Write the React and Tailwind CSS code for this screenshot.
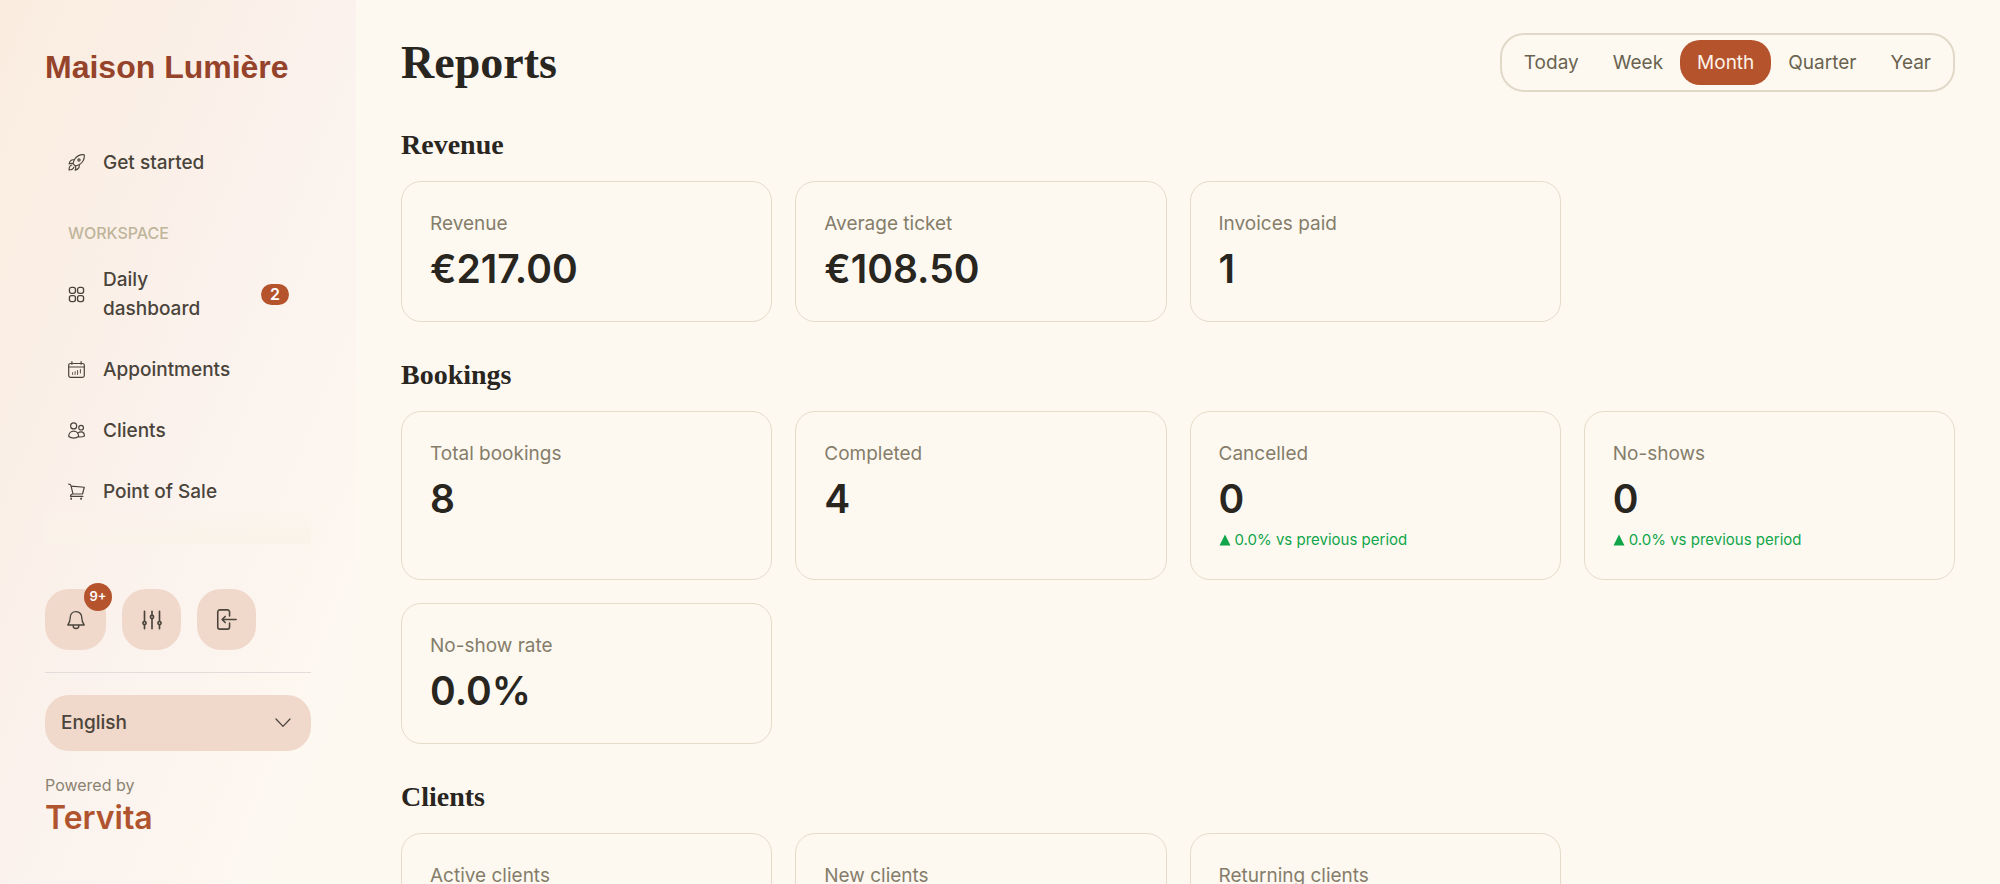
import React, { useState } from "react";

const iconProps = {
  viewBox: "0 0 24 24",
  fill: "none",
  stroke: "currentColor",
  strokeLinecap: "round",
  strokeLinejoin: "round",
  "aria-hidden": true,
};

const RocketIcon = ({ className }) => (
  <svg {...iconProps} strokeWidth="1.6" className={className}>
    <path d="M23 1c-6-.6-10.500 1.500-14.200 7.200L7 13.500 10.500 17l5.300-1.800C21.500 11.500 23.600 7 23 1z" />
    <circle cx="15.500" cy="8.500" r="1.600" />
    <path d="M9 8.200C5 7.500 2.500 9.500 1.500 14l3-1 2.500.5M15.800 15.200c.7 4-1.300 6.500-5.800 7.500l1-3-.5-2.700" />
    <path d="M5.500 15.500C3 16 1.500 18.500 1.500 22.500c4 0 6-1.500 6.800-4" />
  </svg>
);

const GridIcon = ({ className }) => (
  <svg {...iconProps} strokeWidth="1.9" className={className}>
    <rect x="2" y="2" width="8.500" height="8.500" rx="3" />
    <rect x="13.500" y="2" width="8.500" height="8.500" rx="3" />
    <rect x="2" y="13.500" width="8.500" height="8.500" rx="3" />
    <rect x="13.500" y="13.500" width="8.500" height="8.500" rx="3" />
  </svg>
);

const CalendarIcon = ({ className }) => (
  <svg {...iconProps} strokeWidth="1.7" className={className}>
    <rect x="1" y="3.500" width="22" height="19.500" rx="2.500" />
    <path d="M1 8.500h22M5.500 1v3.500M18.500 1v3.500" />
    <path d="M6.500 16.500v2.500M10 15v4M13.500 13.500V19M17.500 12v5" strokeWidth="1.3" />
  </svg>
);

const UsersIcon = ({ className }) => (
  <svg {...iconProps} strokeWidth="1.7" className={className}>
    <circle cx="8" cy="5.500" r="4.300" />
    <circle cx="18.500" cy="8" r="3.300" />
    <path d="M1 20.500c0-4.500 3-7.500 7-7.500s7 3 7 7.500C11 23.500 5 23.500 1 20.500z" />
    <path d="M14 15.500c1.200-1 2.800-1.500 4.500-1.500 2.800 0 4.700 2 4.700 5.800-2.200 1.200-5 1.600-8 1.200" />
  </svg>
);

const CartIcon = ({ className }) => (
  <svg {...iconProps} strokeWidth="1.7" className={className}>
    <path d="M1 1.500c2 0 2.800.5 3.300 2.500L7 15.500M4.500 4.500L23 6l-2.500 9.500H7c-2.500 0-3.500 1-3.500 3.500H21" />
    <path d="M4.500 21.500v1M18.500 21.500v1" strokeWidth="2.400" />
  </svg>
);

const BellIcon = ({ className }) => (
  <svg {...iconProps} strokeWidth="1.600" className={className}>
    <path d="M12 2c-4.500 0-7 3.300-7 7.500 0 4.500-1 6-2.800 8.500h19.600C20 15.500 19 14 19 9.500 19 5.300 16.500 2 12 2z" />
    <path d="M8.500 18.500c0 2.300 1.500 3.700 3.500 3.700s3.500-1.400 3.500-3.700" />
  </svg>
);

const SlidersIcon = ({ className }) => (
  <svg {...iconProps} strokeWidth="2" className={className}>
    <path d="M3 1.500v12M3 18v4.500M12 1.500v4.500M12 10.500v12M21 1.500v12M21 18v4.500" />
    <circle cx="3" cy="15.700" r="1.900" />
    <circle cx="12" cy="8.300" r="1.900" />
    <circle cx="21" cy="15.700" r="1.900" />
  </svg>
);

const LogoutIcon = ({ className }) => (
  <svg {...iconProps} strokeWidth="1.800" className={className}>
    <path d="M15.500 8V3.500c0-1.500-1-2.500-2.500-2.500H4.500C3 1 2 2 2 3.500v17C2 22 3 23 4.500 23H13c1.500 0 2.500-1 2.500-2.500V16" />
    <path d="M23 12H7.500M10.500 8.500L7 12l3.500 3.500" />
  </svg>
);

const ChevronIcon = ({ className }) => (
  <svg {...iconProps} strokeWidth="1.900" className={className}>
    <path d="M1.500 6L12 17 22.500 6" />
  </svg>
);

const workspaceLinks = [
  { label: "Daily dashboard", icon: GridIcon, count: 2 },
  { label: "Appointments", icon: CalendarIcon },
  { label: "Clients", icon: UsersIcon },
  { label: "Point of Sale", icon: CartIcon },
];

const periods = ["Today", "Week", "Month", "Quarter", "Year"];

const sections = [
  {
    title: "Revenue",
    stats: [
      { label: "Revenue", value: "€217.00" },
      { label: "Average ticket", value: "€108.50" },
      { label: "Invoices paid", value: "1" },
    ],
  },
  {
    title: "Bookings",
    stats: [
      { label: "Total bookings", value: "8" },
      { label: "Completed", value: "4" },
      { label: "Cancelled", value: "0", change: "0.0% vs previous period" },
      { label: "No-shows", value: "0", change: "0.0% vs previous period" },
      { label: "No-show rate", value: "0.0%" },
    ],
  },
  {
    title: "Clients",
    stats: [
      { label: "Active clients", value: "2" },
      { label: "New clients", value: "2" },
      { label: "Returning clients", value: "0" },
    ],
  },
];

const NavLink = ({ label, icon: Icon, count }) => (
  <a
    href="#"
    className="flex items-center gap-[18px] py-4 pl-[23px] pr-[22px] text-[19px] font-medium leading-[29px] text-[#4a443b]"
  >
    <Icon className="size-[17px] shrink-0" />
    <span className="flex-1">{label}</span>
    {count && (
      <span className="ml-8 rounded-full bg-[#b5532c] px-[9px] text-base font-semibold leading-[21px] text-white">
        {count}
      </span>
    )}
  </a>
);

const Sidebar = () => {
  const [language, setLanguage] = useState("en");

  return (
    <aside className="flex h-full w-[356px] shrink-0 flex-col bg-linear-to-br from-[#faecdf] via-[#fbf2ed] via-50% to-[#fdf9f1] to-90% p-[45px]">
      <div className="font-['Liberation_Sans',sans-serif] text-[32px] font-bold leading-[44px] text-[#95432a]">
        Maison Lumière
      </div>

      <div className="relative mt-[43px] min-h-0 flex-1 overflow-hidden">
        <nav className="flex flex-col">
          <NavLink label="Get started" icon={RocketIcon} />
          <h2 className="pb-1 pl-[23px] pt-7 text-base font-medium uppercase leading-6 text-[#bfb59b]">
            Workspace
          </h2>
          {workspaceLinks.map((link) => (
            <NavLink key={link.label} {...link} />
          ))}
        </nav>
        <div className="pointer-events-none absolute inset-x-0 bottom-0 h-9 bg-linear-to-b from-transparent to-[#faf3e9]" />
      </div>

      <div className="mt-[45px] flex gap-4 text-[#4a443b]">
        <button
          type="button"
          aria-label="Notifications"
          className="relative flex size-[61px] items-center justify-center rounded-3xl bg-[#f0d8cb]"
        >
          <BellIcon className="size-5" />
          <span className="absolute -right-[6px] -top-[6px] flex size-7 items-center justify-center rounded-full bg-[#b5532c] text-[13px] font-semibold text-white">
            9+
          </span>
        </button>
        <button
          type="button"
          aria-label="Settings"
          className="flex h-[61px] w-[59px] items-center justify-center rounded-3xl bg-[#f0d8cb]"
        >
          <SlidersIcon className="size-5" />
        </button>
        <button
          type="button"
          aria-label="Log out"
          className="flex h-[61px] w-[59px] items-center justify-center rounded-3xl bg-[#f0d8cb]"
        >
          <LogoutIcon className="size-[21px]" />
        </button>
      </div>

      <hr className="my-[22px] border-[#e2dcdb]" />

      <div className="relative">
        <select
          aria-label="Language"
          value={language}
          onChange={(e) => setLanguage(e.target.value)}
          className="h-14 w-full appearance-none rounded-3xl bg-[#f0d8cb] px-4 text-[19px] font-medium text-[#4a443b]"
        >
          <option value="en">English</option>
          <option value="fr">Français</option>
        </select>
        <ChevronIcon className="pointer-events-none absolute right-5 top-5 size-4 text-[#4a443b]" />
      </div>

      <div className="mt-[22px]">
        <p className="text-base leading-6 text-[#8b8371]">Powered by</p>
        <p className="text-[32px] font-semibold leading-[42px] text-[#b0542f]">Tervita</p>
      </div>
    </aside>
  );
};

const StatCard = ({ label, value, change }) => (
  <div className="rounded-[20px] border border-[#e4dcc9] p-7">
    <p className="text-[19px] leading-[27px] text-[#857d6a]">{label}</p>
    <p className="mt-[7px] text-[39px] font-semibold leading-[49px] text-[#29251f]">{value}</p>
    {change && (
      <p className="mt-[6px] flex items-center gap-1 text-[15px] leading-[22px] text-[#10a54a]">
        <svg viewBox="0 0 12 12" className="size-3" fill="currentColor" aria-hidden="true">
          <path d="M6 0.500L11.500 11.500H0.500z" />
        </svg>
        {change}
      </p>
    )}
  </div>
);

const App = () => {
  const [period, setPeriod] = useState("Month");

  return (
    <div className="flex h-screen bg-[#fdf9f1] font-[Inter,sans-serif]">
      <Sidebar />

      <main className="min-w-0 flex-1 overflow-y-auto px-[45px] py-[33px] [scrollbar-width:none]">
        <header className="flex items-center justify-between">
          <h1 className="font-['Liberation_Serif',serif] text-[46px] font-bold leading-[59px] text-[#29251f]">
            Reports
          </h1>
          <div className="flex rounded-3xl border-2 border-[#e0d9c8] p-[5px]">
            {periods.map((item) => (
              <button
                key={item}
                type="button"
                aria-pressed={item === period}
                onClick={() => setPeriod(item)}
                className={`rounded-[20px] px-[17px] py-2 text-[19px] leading-[29px] ${
                  item === period ? "bg-[#b5532c] text-[#fdf3e9]" : "text-[#6a6350]"
                }`}
              >
                {item}
              </button>
            ))}
          </div>
        </header>

        {sections.map((section) => (
          <section key={section.title} className="mt-[37px]">
            <h2 className="font-['Liberation_Serif',serif] text-[28px] font-bold leading-8 text-[#29251f]">
              {section.title}
            </h2>
            <div className="mt-5 grid grid-cols-4 gap-[23px]">
              {section.stats.map((stat) => (
                <StatCard key={stat.label} {...stat} />
              ))}
            </div>
          </section>
        ))}
      </main>
    </div>
  );
};

export default App;
